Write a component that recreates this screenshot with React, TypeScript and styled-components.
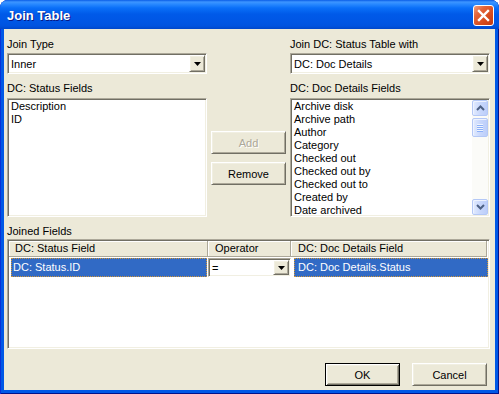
import React from 'react';
import styled, { createGlobalStyle, css } from 'styled-components';

const Global = createGlobalStyle`
  html, body { margin: 0; padding: 0; background: #ffffff; }
  body { font-family: "Liberation Sans", Arial, sans-serif; font-size: 11px; color: #000; }
  * { box-sizing: border-box; }
`;

const sunken = css`
  border: 1px solid;
  border-color: #aca899 #ffffff #ffffff #aca899;
  box-shadow: inset 1px 1px #716f64, inset -1px -1px #f1efe2;
  padding: 1px;
`;

const raised = css`
  border: 1px solid;
  border-color: #ffffff #716f64 #716f64 #ffffff;
  box-shadow: inset 1px 1px #f1efe2, inset -1px -1px #aca899;
`;

const Window = styled.div`
  width: 499px;
  height: 394px;
  display: flex;
  flex-direction: column;
  background: #0058e6;
  border-radius: 8px 8px 0 0;
  overflow: hidden;
  box-shadow: inset 1px 0 #0831d9, inset -1px 0 #00138c, inset 0 -1px #00138c;
`;

const TitleBar = styled.div`
  height: 29px;
  flex: none;
  display: flex;
  align-items: center;
  padding: 1px 5px 0 7px;
  background: linear-gradient(180deg, #0a5de6 0px, #3d95ff 2px, #2a8aff 4px, #0a6ff8 8px, #005ae9 14px, #0056e4 22px, #0053df 26px, #0047ca 29px);
  color: #ffffff;
  font-weight: bold;
  font-size: 13px;
  text-shadow: 1px 1px #0a1883;
`;

const TitleText = styled.div`
  flex: 1;
  padding-top: 1px;
`;

const CloseButton = styled.div`
  width: 21px;
  height: 21px;
  border: 1px solid #ffffff;
  border-radius: 3px;
  background: linear-gradient(135deg, #f0a080 0%, #e3643a 30%, #d4481a 70%, #c23a10 100%);
  display: flex;
  align-items: center;
  justify-content: center;
`;

const Client = styled.div`
  flex: 1;
  margin: 0 4px 4px 4px;
  background: #ece9d8;
  padding: 9px 5px 4px 3px;
  display: flex;
  flex-direction: column;
`;

const TopGrid = styled.div`
  display: grid;
  grid-template-columns: 200px 83px 200px;
  row-gap: 8px;
`;

const Field = styled.div<{ $col: number }>`
  grid-column: ${p => p.$col};
  display: flex;
  flex-direction: column;
`;

const Label = styled.div<{ $mb?: number; $mt?: number }>`
  height: 13px;
  line-height: 13px;
  margin-top: ${p => p.$mt ?? 0}px;
  margin-bottom: ${p => p.$mb ?? 2}px;
  padding-left: 0;
  white-space: nowrap;
`;

const Combo = styled.div<{ $w: number; $h: number }>`
  ${sunken};
  width: ${p => p.$w}px;
  height: ${p => p.$h}px;
  background: #ffffff;
  display: flex;
`;

const ComboText = styled.div<{ $pl: number }>`
  flex: 1;
  padding-left: ${p => p.$pl}px;
  display: flex;
  align-items: center;
  white-space: nowrap;
`;

const DropButton = styled.div`
  ${raised};
  width: 16px;
  height: 100%;
  background: #ece9d8;
  display: flex;
  align-items: center;
  justify-content: center;
`;

const ListBox = styled.div`
  ${sunken};
  width: 200px;
  height: 119px;
  background: #ffffff;
  display: flex;
  overflow: hidden;
`;

const Items = styled.div`
  flex: 1;
  display: flex;
  flex-direction: column;
`;

const Item = styled.div`
  height: 13px;
  line-height: 13px;
  padding-left: 2px;
  white-space: nowrap;
`;

const ScrollBar = styled.div`
  width: 16px;
  display: flex;
  flex-direction: column;
  background: #fbfbf8;
`;

const scrollPart = css`
  border: 1px solid #b4c8f6;
  border-radius: 2px;
  background: linear-gradient(90deg, #e2ebfe 0%, #c9d8fc 50%, #bccefa 100%);
  box-shadow: inset 1px 1px #eef3ff;
`;

const ScrollBtn = styled.div`
  ${scrollPart};
  height: 16px;
  flex: none;
  display: flex;
  align-items: center;
  justify-content: center;
`;

const Track = styled.div`
  flex: 1;
  padding-top: 2px;
`;

const Thumb = styled.div`
  ${scrollPart};
  height: 19px;
  display: flex;
  flex-direction: column;
  align-items: center;
  justify-content: center;
  gap: 0;
`;

const Grip = styled.div`
  width: 6px;
  height: 1px;
  background: #eef4fe;
  border-bottom: 1px solid #8cb0f8;
  box-sizing: content-box;
`;

const ButtonStack = styled.div`
  grid-column: 2;
  display: flex;
  flex-direction: column;
  align-items: center;
  padding-top: 49px;
  gap: 8px;
`;

const Button = styled.div<{ $default?: boolean; $disabled?: boolean }>`
  width: 75px;
  height: 23px;
  background: #ece9d8;
  display: flex;
  align-items: center;
  justify-content: center;
  white-space: nowrap;
  color: ${p => (p.$disabled ? '#aca899' : '#000000')};
  text-shadow: ${p => (p.$disabled ? '1px 1px #ffffff' : 'none')};
  ${p =>
    p.$default
      ? css`
          border: 1px solid #000000;
          box-shadow: inset 1px 1px #ffffff, inset -1px -1px #716f64, inset 2px 2px #f1efe2, inset -2px -2px #aca899;
        `
      : raised};
`;

const ListView = styled.div`
  ${sunken};
  height: 110px;
  background: #ffffff;
  display: flex;
  flex-direction: column;
`;

const cols = css`
  display: grid;
  grid-template-columns: 199px 83px 196px;
`;

const Header = styled.div`
  ${cols};
  height: 16px;
`;

const HeaderCell = styled.div<{ $pl: number }>`
  background: #ece9d8;
  border-right: 1px solid #aca899;
  border-bottom: 1px solid #aca899;
  box-shadow: inset 1px 1px #ffffff;
  padding-left: ${p => p.$pl}px;
  line-height: 15px;
  white-space: nowrap;
  overflow: hidden;
`;

const Row = styled.div`
  ${cols};
  height: 19px;
  margin-top: 1px;
`;

const Cell = styled.div<{ $ml: number; $mr: number }>`
  padding-left: ${p => p.$ml}px;
  padding-right: ${p => p.$mr}px;
  display: flex;
`;

const Selected = styled.div<{ $pl: number; $w?: number }>`
  flex: ${p => (p.$w ? 'none' : 1)};
  width: ${p => (p.$w ? `${p.$w}px` : 'auto')};
  background: #316ac5;
  color: #ffffff;
  border: 1px dotted #ce953a;
  padding-left: ${p => p.$pl}px;
  line-height: 17px;
  white-space: nowrap;
`;

const Footer = styled.div`
  display: flex;
  justify-content: flex-end;
  gap: 12px;
  margin-top: 14px;
  margin-right: 3px;
`;

const DownArrow = () => (
  <svg width="7" height="4" viewBox="0 0 7 4">
    <path d="M0 0H7L3.5 4Z" fill="#000" />
  </svg>
);

const Chevron = ({ up }: { up?: boolean }) => (
  <svg width="9" height="6" viewBox="0 0 9 6">
    <path
      d={up ? 'M1 5L4.5 1.5L8 5' : 'M1 1L4.5 4.5L8 1'}
      fill="none"
      stroke="#4d6185"
      strokeWidth="2"
    />
  </svg>
);

const details = [
  'Archive disk',
  'Archive path',
  'Author',
  'Category',
  'Checked out',
  'Checked out by',
  'Checked out to',
  'Created by',
  'Date archived',
];

export default function App() {
  return (
    <>
      <Global />
      <Window>
        <TitleBar>
          <TitleText>Join Table</TitleText>
          <CloseButton>
            <svg width="19" height="19" viewBox="0 0 19 19">
              <path d="M5 5L14 14M14 5L5 14" stroke="#ffffff" strokeWidth="2.4" strokeLinecap="square" />
            </svg>
          </CloseButton>
        </TitleBar>
        <Client>
          <TopGrid>
            <Field $col={1}>
              <Label>Join Type</Label>
              <Combo $w={200} $h={21}>
                <ComboText $pl={2}>Inner</ComboText>
                <DropButton>
                  <DownArrow />
                </DropButton>
              </Combo>
            </Field>
            <Field $col={3}>
              <Label>Join DC: Status Table with</Label>
              <Combo $w={200} $h={21}>
                <ComboText $pl={2}>DC: Doc Details</ComboText>
                <DropButton>
                  <DownArrow />
                </DropButton>
              </Combo>
            </Field>
            <Field $col={1}>
              <Label $mb={3}>DC: Status Fields</Label>
              <ListBox>
                <Items>
                  <Item>Description</Item>
                  <Item>ID</Item>
                </Items>
              </ListBox>
            </Field>
            <ButtonStack>
              <Button $disabled>Add</Button>
              <Button>Remove</Button>
            </ButtonStack>
            <Field $col={3}>
              <Label $mb={3}>DC: Doc Details Fields</Label>
              <ListBox>
                <Items>
                  {details.map(d => (
                    <Item key={d}>{d}</Item>
                  ))}
                </Items>
                <ScrollBar>
                  <ScrollBtn>
                    <Chevron up />
                  </ScrollBtn>
                  <Track>
                    <Thumb>
                      <Grip />
                      <Grip />
                      <Grip />
                      <Grip />
                    </Thumb>
                  </Track>
                  <ScrollBtn>
                    <Chevron />
                  </ScrollBtn>
                </ScrollBar>
              </ListBox>
            </Field>
          </TopGrid>
          <Label $mt={8} $mb={1}>Joined Fields</Label>
          <ListView>
            <Header>
              <HeaderCell $pl={6}>DC: Status Field</HeaderCell>
              <HeaderCell $pl={7}>Operator</HeaderCell>
              <HeaderCell $pl={7}>DC: Doc Details Field</HeaderCell>
            </Header>
            <Row>
              <Cell $ml={2} $mr={1}>
                <Selected $pl={1}>DC: Status.ID</Selected>
              </Cell>
              <Cell $ml={0} $mr={0}>
                <Combo $w={84} $h={19}>
                  <ComboText $pl={2}>=</ComboText>
                  <DropButton>
                    <DownArrow />
                  </DropButton>
                </Combo>
              </Cell>
              <Cell $ml={3} $mr={0}>
                <Selected $pl={3} $w={194}>DC: Doc Details.Status</Selected>
              </Cell>
            </Row>
          </ListView>
          <Footer>
            <Button $default>OK</Button>
            <Button>Cancel</Button>
          </Footer>
        </Client>
      </Window>
    </>
  );
}
